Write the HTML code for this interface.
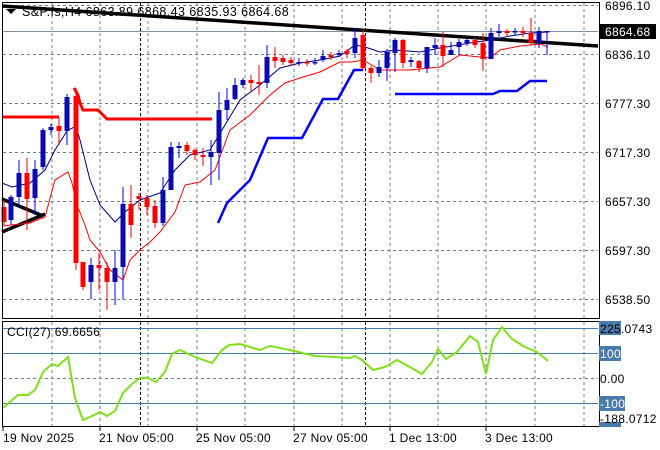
<!DOCTYPE html>
<html><head><meta charset="utf-8"><style>
html,body{margin:0;padding:0;background:#fff;width:660px;height:450px;overflow:hidden}
svg{display:block}
text{font-family:"Liberation Sans",sans-serif;font-size:12px;fill:#000;letter-spacing:0.3px}
</style></head><body>
<svg width="660" height="450" viewBox="0 0 660 450" xmlns="http://www.w3.org/2000/svg">
<rect width="660" height="450" fill="#fff"/>
<g stroke="#6e7b8b" stroke-width="1" stroke-dasharray="3,3" fill="none">
<path d="M52 3V318M100 3V318M148 3V318M197 3V318M245 3V318M294 3V318M342 3V318M390 3V318M438 3V318M486 3V318M535 3V318M584 3V318"/>
<path d="M52 322V426M100 322V426M148 322V426M197 322V426M245 322V426M294 322V426M342 322V426M390 322V426M438 322V426M486 322V426M535 322V426M584 322V426"/>
<path d="M3 5.5H598M3 54.5H598M3 103.5H598M3 152.5H598M3 201.5H598M3 250.5H598M3 299.5H598M3 378.5H598"/>
</g>
<g stroke="#000" stroke-width="1" stroke-dasharray="3,2"><path d="M140.5 3V318M365.5 3V318M140.5 322V426M365.5 322V426"/></g>
<path d="M3 31.5H598" stroke="#8090a0"/>
<g stroke="#4a7aaa"><path d="M3 328.5H598M3 353.5H598M3 403.5H598"/></g>
<path d="M2 6L330 28L598 46" stroke="#000" stroke-width="3.5" fill="none"/>
<path d="M2 199L43 216M2 232L45 214" stroke="#000" stroke-width="3.5" fill="none"/>
<path d="M3 117H59M74 88L78 95L80 103L83 110H98L107 119H212" stroke="#ff0000" stroke-width="3" fill="none"/>
<path d="M218 223L227 203L250 180L268 138H302L323 99H338L354 70H363M395 94H493L500 91H517L530 81H547" stroke="#0000ff" stroke-width="2.5" fill="none"/>
<path d="M2 226L30 223L45 217L55 180L68 172L72 183L77 205L85 225L90 240L100 252L110 270L123 280L130 260L140 250L150 242L160 232L175 212L185 185L200 182L215 170L230 130L250 115L270 95L285 83L300 78L320 72L340 62L352 62L363 60L380 70L410 70L440 67L460 55L490 58L500 50L520 46L540 44L548 47" stroke="#ff0000" stroke-width="1" fill="none"/>
<path d="M2 183L12 187L30 183L45 170L55 150L67 131L76 126L80 140L90 180L100 205L115 222L125 212L140 200L160 193L175 170L190 155L210 150L225 125L240 100L260 85L280 68L300 63L320 60L340 56L355 45L365 47L380 52L395 50L420 52L440 48L470 43L490 40L510 36L530 33L548 32" stroke="#000080" stroke-width="1" fill="none"/>
<g>
<path d="M4 200V225M27 158V230M59 118V145M76 88V270M83 262V290M99 253V290M107 262V310M131 185V238M139 193V210M147 195V215M155 200V228M187 142V155M195 148V160M203 148V166M251 75V92M259 65V95M275 47V68M283 55V65M291 57V66M307 59V66M331 52V60M347 49V58M363 30V70M371 66V83M403 39V68M419 60V72M443 32V67M475 37V48M483 33V71M507 29V37M523 27V37M531 18V45" stroke="#ff0000"/>
<path d="M11 195V225M19 160V207M35 160V215M43 128V170M51 124V135M67 94V145M91 258V299M115 250V305M123 187V299M163 177V226M171 142V190M179 142V158M211 140V185M219 92V180M227 88V120M235 78V100M243 78V88M267 45V88M299 58V66M315 58V65M323 50V62M339 50V57M355 28V58M379 60V77M387 49V81M395 38V72M411 57V67M427 47V73M435 38V55M451 42V55M459 39V55M467 38V46M491 28V59M499 24V37M515 28V35M539 27V48M547 31V55" stroke="#0000ff"/>
<g fill="#ff0000">
<rect x="1.5" y="207" width="5" height="15"/><rect x="24.5" y="173" width="5" height="26"/><rect x="56.5" y="126" width="5" height="5"/><rect x="73.5" y="96" width="5" height="167"/><rect x="80.5" y="262" width="5" height="25"/><rect x="96.5" y="265" width="5" height="3"/><rect x="104.5" y="268" width="5" height="14"/><rect x="128.5" y="204" width="5" height="21"/><rect x="136.5" y="196" width="5" height="3"/><rect x="144.5" y="198" width="5" height="9"/><rect x="152.5" y="206" width="5" height="17"/><rect x="184.5" y="145" width="5" height="6"/><rect x="192.5" y="150" width="5" height="5"/><rect x="200.5" y="155" width="5" height="2"/><rect x="248.5" y="80" width="5" height="3"/><rect x="256.5" y="82" width="5" height="2"/><rect x="272.5" y="57" width="5" height="4"/><rect x="280.5" y="58" width="5" height="4"/><rect x="288.5" y="60" width="5" height="3"/><rect x="304.5" y="62" width="5" height="1.5"/><rect x="328.5" y="55" width="5" height="2"/><rect x="344.5" y="51" width="5" height="3"/><rect x="360.5" y="35" width="5" height="33"/><rect x="368.5" y="68" width="5" height="5"/><rect x="400.5" y="40" width="5" height="23"/><rect x="416.5" y="61" width="5" height="7"/><rect x="440.5" y="45" width="5" height="11"/><rect x="472.5" y="40" width="5" height="5"/><rect x="480.5" y="43" width="5" height="16"/><rect x="504.5" y="31" width="5" height="2"/><rect x="520.5" y="31" width="5" height="2"/><rect x="528.5" y="33" width="5" height="10"/>
</g>
<g fill="#0a0ab0">
<rect x="8.5" y="197" width="5" height="23"/><rect x="16.5" y="173" width="5" height="24"/><rect x="32.5" y="169" width="5" height="29"/><rect x="40.5" y="130" width="5" height="37"/><rect x="48.5" y="127" width="5" height="3"/><rect x="64.5" y="97" width="5" height="34"/><rect x="88.5" y="265" width="5" height="17"/><rect x="112.5" y="268" width="5" height="14"/><rect x="120.5" y="204" width="5" height="63"/><rect x="160.5" y="190" width="5" height="33"/><rect x="168.5" y="147" width="5" height="43"/><rect x="176.5" y="146" width="5" height="2"/><rect x="208.5" y="152" width="5" height="5"/><rect x="216.5" y="110" width="5" height="43"/><rect x="224.5" y="100" width="5" height="10"/><rect x="232.5" y="85" width="5" height="14"/><rect x="240.5" y="80" width="5" height="5"/><rect x="264.5" y="57" width="5" height="26"/><rect x="296.5" y="62" width="5" height="1.5"/><rect x="312.5" y="62" width="5" height="1.5"/><rect x="320.5" y="56" width="5" height="4"/><rect x="336.5" y="53" width="5" height="2"/><rect x="352.5" y="38" width="5" height="15"/><rect x="376.5" y="67" width="5" height="6"/><rect x="384.5" y="52" width="5" height="16"/><rect x="392.5" y="40" width="5" height="13"/><rect x="408.5" y="60" width="5" height="2"/><rect x="424.5" y="47" width="5" height="21"/><rect x="432.5" y="45" width="5" height="3"/><rect x="448.5" y="50" width="5" height="5"/><rect x="456.5" y="42" width="5" height="5"/><rect x="464.5" y="40" width="5" height="3"/><rect x="488.5" y="33" width="5" height="26"/><rect x="496.5" y="31" width="5" height="2"/><rect x="512.5" y="31" width="5" height="1.5"/><rect x="536.5" y="31" width="5" height="12"/><rect x="544.5" y="31" width="5" height="1.5"/>
</g>
</g>
<path d="M3 408L18 395L28 395L35 390L43 372L52 364L58 366L68 357L75 398L83 420L92 416L100 412L107 416L115 411L123 393L132 384L140 378L148 378L156 382L165 372L172 354L180 350L195 357L212 363L222 350L229 345L240 344L250 347L260 350L270 346L290 350L315 356L335 357L350 358L355 356L362 360L373 370L385 367L397 360L410 367L422 374L432 362L438 349L446 359L457 352L470 336L478 342L486 374L493 340L502 327L512 339L525 347L537 352L548 361" stroke="#7fe01a" stroke-width="2" fill="none"/>
<rect x="2.5" y="2.5" width="597" height="316" fill="none" stroke="#000"/>
<rect x="2.5" y="321.5" width="597" height="105" fill="none" stroke="#000"/>
<path d="M6 9h10l-5 5z" fill="#000"/>
<text x="22" y="16" style="font-size:12.5px;letter-spacing:0.4px">S&amp;P.fs,H4  6863.89 6868.43 6835.93 6864.68</text>
<text x="7" y="336">CCI(27) 69.6656</text>
<text x="605" y="10">6896.10</text>
<rect x="599" y="24" width="57" height="15" fill="#000"/>
<text x="605" y="36" style="fill:#fff">6864.68</text>
<text x="605" y="59">6836.10</text>
<text x="605" y="108">6777.30</text>
<text x="605" y="157">6717.30</text>
<text x="605" y="206">6657.30</text>
<text x="605" y="255">6597.30</text>
<text x="605" y="304">6538.50</text>
<g fill="#4a7aaa">
<rect x="599" y="321" width="22" height="14"/>
<rect x="599" y="346" width="22" height="15"/>
<rect x="599" y="396" width="26" height="15"/>
<rect x="599" y="422" width="22" height="5"/>
</g>
<text x="600" y="333">225.0743</text>
<text x="600" y="358" style="fill:#fff">100</text>
<text x="600" y="383">0.00</text>
<text x="600" y="408" style="fill:#fff">-100</text>
<text x="600" y="423">-188.0712</text>
<g stroke="#000"><path d="M3 427v4M100 427v4M197 427v4M294 427v4M390 427v4M486 427v4"/></g>
<text x="3" y="442">19 Nov 2025</text>
<text x="99" y="442">21 Nov 05:00</text>
<text x="196" y="442">25 Nov 05:00</text>
<text x="293" y="442">27 Nov 05:00</text>
<text x="389" y="442">1 Dec 13:00</text>
<text x="485" y="442">3 Dec 13:00</text>
</svg>
</body></html>
